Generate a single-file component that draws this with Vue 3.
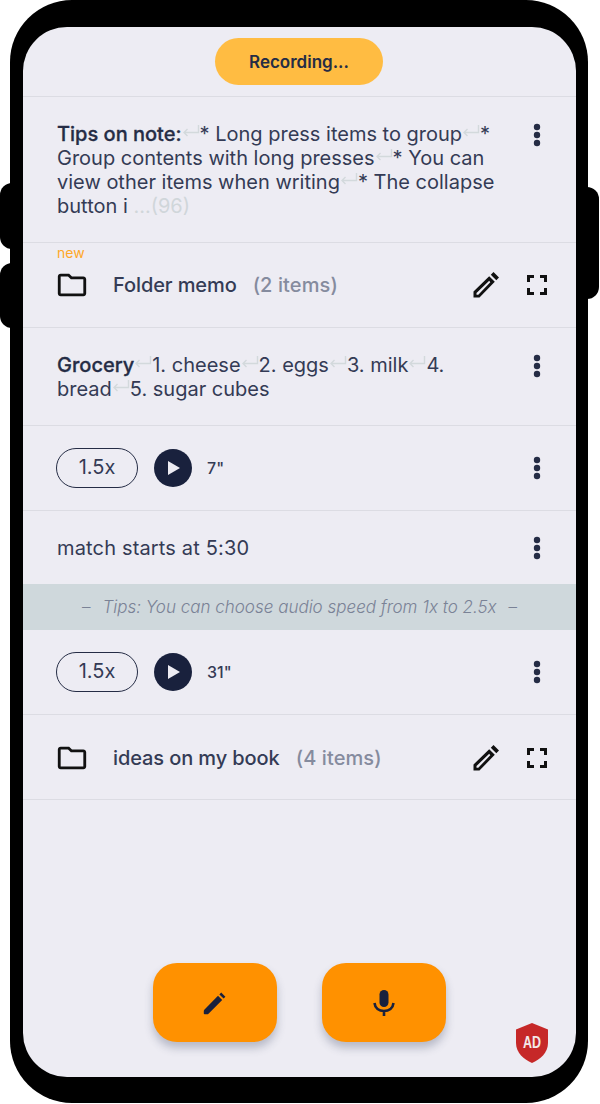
<script setup>
const tipParts = [
  { t: '* Long press items to group', r: true },
  { t: '* Group contents with long presses', r: true },
  { t: '* You can view other items when writing', r: true },
  { t: '* The collapse button i ', r: false }
]
const groceryParts = [
  { t: '1. cheese', r: true },
  { t: '2. eggs', r: true },
  { t: '3. milk', r: true },
  { t: '4. bread', r: true },
  { t: '5. sugar cubes', r: false }
]
</script>

<template>
  <div class="page">
    <div class="side side-l1"></div>
    <div class="side side-l2"></div>
    <div class="side side-r"></div>
    <div class="phone">
      <div class="screen">
        <div class="top">
          <div class="recording">Recording...</div>
        </div>

        <div class="row note-first">
          <div class="note">
            <b>Tips on note:</b><svg class="ret" viewBox="0 0 18 12"><path d="M16.5 0v7.500H2M5.500 4 2 7.500 5.500 11" /></svg>
            <template v-for="p in tipParts" :key="p.t">{{ p.t }}<svg v-if="p.r" class="ret" viewBox="0 0 18 12"><path d="M16.5 0v7.500H2M5.500 4 2 7.500 5.500 11" /></svg></template>
            <span class="more">...(96)</span>
          </div>
          <svg class="dots" viewBox="0 0 8 24"><circle cx="4" cy="4" r="3.2" /><circle cx="4" cy="12" r="3.2" /><circle cx="4" cy="20" r="3.2" /></svg>
        </div>

        <div class="row folder folder-new">
          <span class="new">new</span>
          <svg class="folder-ic" viewBox="0 0 24 24"><path d="M9.17 6l2 2H20v10H4V6h5.17M10 4H4c-1.1 0-1.99.9-1.99 2L2 18c0 1.1.9 2 2 2h16c1.1 0 2-.9 2-2V8c0-1.1-.9-2-2-2h-8l-2-2z" /></svg>
          <span class="folder-name">Folder memo</span>
          <span class="count">(2 items)</span>
          <svg class="pencil" viewBox="0 0 30 30"><path d="M22.500 2 28 7.500 25.300 10.200 19.800 4.700zM18.200 6.200 23.800 11.800 8.500 27.500H2.500v-6zM18.200 10.800 5.500 23v1.800h1.800L19.300 12.200z" fill-rule="evenodd" /></svg>
          <svg class="expand" viewBox="0 0 24 24"><path d="M2 9V2h7v3H5v4zM15 2h7v7h-3V5h-4zM2 15h3v4h4v3H2zM19 15h3v7h-7v-3h4z" /></svg>
        </div>

        <div class="row note-grocery">
          <div class="note">
            <b>Grocery</b><svg class="ret" viewBox="0 0 18 12"><path d="M16.5 0v7.500H2M5.500 4 2 7.500 5.500 11" /></svg>
            <template v-for="p in groceryParts" :key="p.t">{{ p.t }}<svg v-if="p.r" class="ret" viewBox="0 0 18 12"><path d="M16.5 0v7.500H2M5.500 4 2 7.500 5.500 11" /></svg></template>
          </div>
          <svg class="dots" viewBox="0 0 8 24"><circle cx="4" cy="4" r="3.2" /><circle cx="4" cy="12" r="3.2" /><circle cx="4" cy="20" r="3.2" /></svg>
        </div>

        <div class="row audio">
          <span class="speed">1.5x</span>
          <span class="play"><svg viewBox="0 0 12 14"><path d="M0 0 12 7 0 14z" /></svg></span>
          <span class="secs">7"</span>
          <svg class="dots" viewBox="0 0 8 24"><circle cx="4" cy="4" r="3.2" /><circle cx="4" cy="12" r="3.2" /><circle cx="4" cy="20" r="3.2" /></svg>
        </div>

        <div class="row plain">
          <div class="note">match starts at 5:30</div>
          <svg class="dots" viewBox="0 0 8 24"><circle cx="4" cy="4" r="3.2" /><circle cx="4" cy="12" r="3.2" /><circle cx="4" cy="20" r="3.2" /></svg>
        </div>

        <div class="tip-bar"><span>–</span><i>Tips: You can choose audio speed from 1x to 2.5x</i><span>–</span></div>

        <div class="row audio">
          <span class="speed">1.5x</span>
          <span class="play"><svg viewBox="0 0 12 14"><path d="M0 0 12 7 0 14z" /></svg></span>
          <span class="secs">31"</span>
          <svg class="dots" viewBox="0 0 8 24"><circle cx="4" cy="4" r="3.2" /><circle cx="4" cy="12" r="3.2" /><circle cx="4" cy="20" r="3.2" /></svg>
        </div>

        <div class="row folder folder-last">
          <svg class="folder-ic" viewBox="0 0 24 24"><path d="M9.17 6l2 2H20v10H4V6h5.17M10 4H4c-1.1 0-1.99.9-1.99 2L2 18c0 1.1.9 2 2 2h16c1.1 0 2-.9 2-2V8c0-1.1-.9-2-2-2h-8l-2-2z" /></svg>
          <span class="folder-name">ideas on my book</span>
          <span class="count">(4 items)</span>
          <svg class="pencil" viewBox="0 0 30 30"><path d="M22.500 2 28 7.500 25.300 10.200 19.800 4.700zM18.200 6.200 23.800 11.800 8.500 27.500H2.500v-6zM18.200 10.800 5.500 23v1.800h1.800L19.300 12.200z" fill-rule="evenodd" /></svg>
          <svg class="expand" viewBox="0 0 24 24"><path d="M2 9V2h7v3H5v4zM15 2h7v7h-3V5h-4zM2 15h3v4h4v3H2zM19 15h3v7h-7v-3h4z" /></svg>
        </div>

        <div class="fabs">
          <div class="fab">
            <svg class="fab-pen" viewBox="0 0 28 28"><path d="M20.200 3.600 24.400 7.800 22.600 9.600 18.400 5.400zM17 6.800 21.200 11 7.500 24.700c-.4.4-.9.6-1.400.6H3.600a.8.8 0 0 1-.8-.8v-2.400c0-.5.2-1 .5-1.400z" /></svg>
          </div>
          <div class="fab">
            <svg class="fab-mic" viewBox="0 0 22 28"><rect x="6.500" y="1" width="9" height="17" rx="4.500" /><path class="mic-arc" d="M1.500 14c.5 5 4.500 8 9.500 8s9-3 9.500-8M11 22v5" /></svg>
          </div>
        </div>

        <svg class="ad" viewBox="0 0 34 40">
          <path d="M17 0 33 6.500V20C33 30 25 36.500 17 40 9 36.500 1 30 1 20V6.500z" fill="#c62828" />
          <text x="17" y="25" text-anchor="middle" textLength="18" lengthAdjust="spacingAndGlyphs">AD</text>
        </svg>
      </div>
    </div>
  </div>
</template>

<style>
html, body {
  margin: 0;
  background: #fff;
}
</style>

<style scoped>
.page {
  position: relative;
  width: 600px;
  height: 1104px;
  padding: 0 12px 1px 10px;
  box-sizing: border-box;
  font-family: Inter, "Liberation Sans", sans-serif;
  color: #252c45;
}
.side {
  position: absolute;
  width: 24px;
  background: #000;
  border-radius: 14px;
}
.side-l1 { left: 0; top: 183px; height: 66px; }
.side-l2 { left: 0; top: 263px; height: 65px; }
.side-r { right: 1px; top: 187px; height: 112px; }
.phone {
  position: relative;
  height: 100%;
  box-sizing: border-box;
  padding: 27px 12px 26px 13px;
  background: #000;
  border-radius: 62px;
}
.screen {
  position: relative;
  height: 100%;
  display: flex;
  flex-direction: column;
  overflow: hidden;
  background: #edecf3;
  border-radius: 44px;
}
.top {
  height: 58px;
  padding-top: 11px;
  display: flex;
  justify-content: center;
  align-items: flex-start;
  border-bottom: 1px solid #dcdce3;
}
.recording {
  width: 168px;
  height: 47px;
  margin-left: -1px;
  line-height: 48px;
  text-align: center;
  border-radius: 24px;
  background: #ffbc42;
  font-size: 17px;
  font-weight: 600;
  color: #252c45;
}
.row {
  position: relative;
  display: flex;
  align-items: center;
  padding: 0 35px 0 34px;
  border-bottom: 1px solid #dcdce3;
  flex-shrink: 0;
}
.note {
  flex: 1;
  font-size: 20px;
  line-height: 24px;
  color: #343b55;
}
.note b {
  font-weight: 500;
  color: #252c45;
  -webkit-text-stroke: 0.3px #252c45;
}
.ret {
  display: inline-block;
  width: 18px;
  height: 12px;
  vertical-align: 4px;
}
.ret path {
  fill: none;
  stroke: #d3d9dc;
  stroke-width: 1.4;
}
.more {
  color: #d0d6da;
}
.dots {
  flex-shrink: 0;
  width: 8px;
  height: 24px;
  margin-left: 32px;
  fill: #252c45;
}
.note-first {
  height: 146px;
  align-items: flex-start;
  padding-top: 26px;
  box-sizing: border-box;
}
.note-first .note {
  margin-top: -1px;
}
.note-grocery {
  height: 98px;
  align-items: flex-start;
  padding-top: 26px;
  box-sizing: border-box;
}
.note-grocery .note {
  margin-top: -1px;
}
.folder {
  height: 84px;
}
.folder-last {
  box-sizing: border-box;
  height: 85px;
  padding-top: 1px;
}
.new {
  position: absolute;
  left: 34px;
  top: 1px;
  font-size: 14px;
  color: #ffa726;
}
.folder-ic {
  width: 34px;
  height: 34px;
  margin-left: -2px;
  fill: #111;
  flex-shrink: 0;
}
.folder-name {
  margin-left: 24px;
  font-size: 20px;
  font-weight: 500;
  letter-spacing: -0.1px;
  color: #343b55;
}
.count {
  margin-left: 16px;
  font-size: 20px;
  font-weight: 500;
  letter-spacing: 0.1px;
  color: #858b9e;
  flex: 1;
}
.pencil {
  width: 30px;
  height: 30px;
  fill: #111;
  flex-shrink: 0;
}
.expand {
  width: 24px;
  height: 24px;
  margin-left: 24px;
  margin-right: -8px;
  fill: #111;
  flex-shrink: 0;
}
.audio {
  height: 84px;
}
.speed {
  width: 82px;
  height: 40px;
  line-height: 37px;
  margin-left: -1px;
  box-sizing: border-box;
  text-align: center;
  border: 1.6px solid #252c45;
  border-radius: 20px;
  font-size: 20px;
  color: #343b55;
  flex-shrink: 0;
}
.play {
  width: 38px;
  height: 38px;
  margin-left: 16px;
  border-radius: 50%;
  background: #19213d;
  display: flex;
  align-items: center;
  justify-content: center;
  flex-shrink: 0;
}
.play svg {
  width: 12px;
  height: 14px;
  margin-left: 2px;
  fill: #edecf3;
}
.secs {
  margin-left: 15px;
  flex: 1;
  font-size: 16px;
  font-weight: 500;
  color: #343b55;
}
.plain {
  height: 73px;
  border-bottom: none;
}
.plain .note {
  letter-spacing: 0.16px;
}
.tip-bar {
  height: 46px;
  display: flex;
  align-items: center;
  justify-content: center;
  gap: 12px;
  background: #cfd8dc;
  color: #7a8296;
  font-size: 17px;
  font-weight: 300;
  flex-shrink: 0;
}
.fabs {
  margin-top: auto;
  margin-bottom: 35px;
  display: flex;
  justify-content: center;
  gap: 45px;
}
.fab {
  width: 124px;
  height: 79px;
  display: flex;
  align-items: center;
  justify-content: center;
  border-radius: 24px;
  background: #ff9100;
  box-shadow: 0 6px 8px rgba(60, 70, 100, 0.3);
}
.fab-pen {
  width: 28px;
  height: 28px;
  fill: #19213d;
}
.fab-mic {
  width: 22px;
  height: 28px;
  fill: #19213d;
}
.mic-arc {
  fill: none;
  stroke: #19213d;
  stroke-width: 2.6;
}
.ad {
  position: absolute;
  right: 27px;
  bottom: 14px;
  width: 34px;
  height: 40px;
}
.ad text {
  font-family: "Liberation Sans", sans-serif;
  font-size: 16.500px;
  font-weight: 700;
  fill: #f3e9e9;
}
</style>
